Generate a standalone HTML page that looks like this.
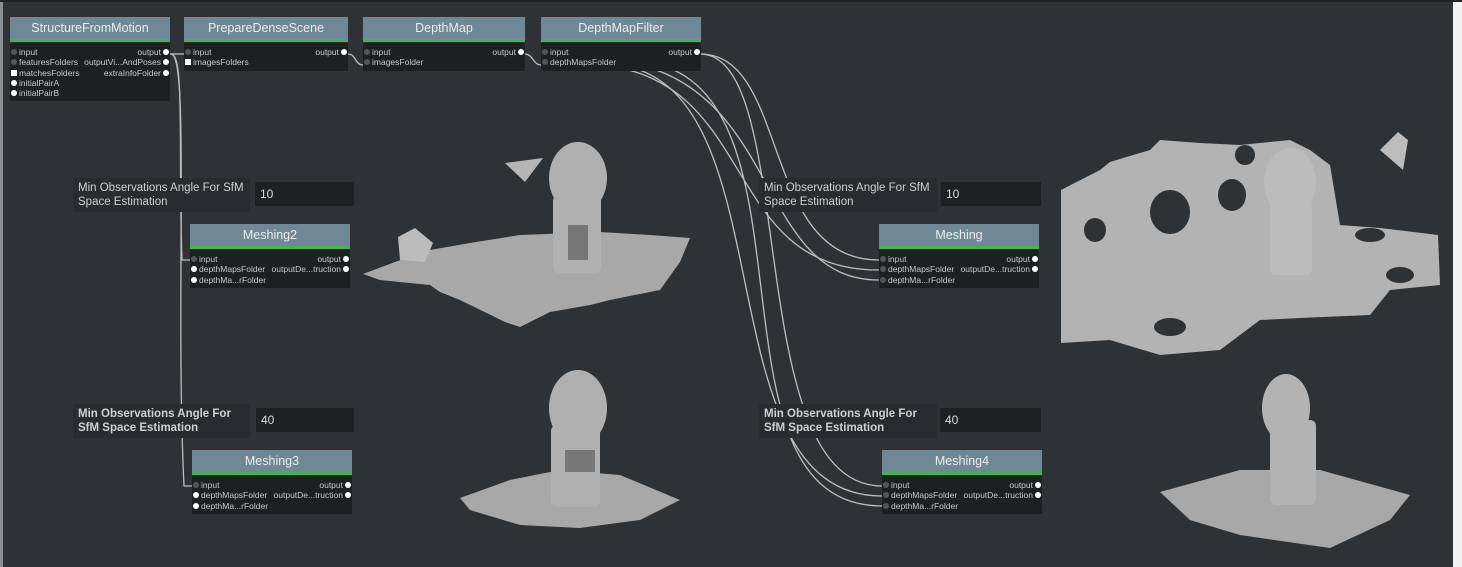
<!DOCTYPE html>
<html><head><meta charset="utf-8"><style>
body{margin:0;width:1462px;height:567px;background:#2f3235;position:relative;overflow:hidden;font-family:"Liberation Sans",sans-serif;}
.n{position:absolute;}
.h{height:22px;background:#6e8895;color:#e8eef0;font-size:12.5px;text-align:center;line-height:22px;border-bottom:3px solid #4caf50;}
.b{background:#1d1f21;color:#c9c9c9;font-size:8.5px;padding:4px 0 3px;margin-top:1px;}
.r{height:10.3px;line-height:10.3px;position:relative;padding-left:9px;white-space:nowrap;}
.r .o{position:absolute;right:9px;top:0;}
.d{position:absolute;left:1px;top:2px;width:6px;height:6px;border-radius:50%;background:#555;}
.w{background:#fff}
.sq{border-radius:0;background:#fff}
.od{position:absolute;right:1px;top:2px;width:6px;height:6px;border-radius:50%;background:#fff;}
.lab{position:absolute;background:#292b2e;color:#cfcfcf;font-size:11.5px;line-height:14px;padding:3px 5px;}
.val{position:absolute;background:#1e2022;color:#d8d8d8;font-size:12px;line-height:24px;padding-left:5px;height:24px;}
</style></head><body>
<div style="position:absolute;left:0;top:0;width:3px;height:567px;background:#8c8f92"></div>
<div style="position:absolute;right:0;top:0;width:9px;height:567px;background:#f2f2f2"></div>
<div style="position:absolute;left:0;top:0;width:1462px;height:2px;background:#222"></div>

<svg width="1462" height="567" style="position:absolute;left:0;top:0">
<g fill="none" stroke="#bdbdbd" stroke-width="1.3">
<path d="M171 54 C185 54 178 150 182 260 L190 260"/>
<path d="M171 54 C190 54 175 300 184 486 L192 486"/>
<path d="M348 54 C356 54 355 65 363 65"/>
<path d="M525 54 C533 54 533 65 541 65"/>
<path d="M170 54 L184 54"/>
<path d="M700 54 C790 54 760 260 879 260"/>
<path d="M700 54 C800 54 740 486 882 486"/>
<path d="M600 65 C760 80 720 270 879 270"/>
<path d="M620 65 C790 90 700 496 882 496"/>
<path d="M640 65 C780 100 760 280 879 280"/>
<path d="M660 65 C820 110 700 506 882 506"/>
</g>
<g fill="#a8a8a8">
<polygon points="363,274 395,262 430,250 470,243 520,235 600,232 650,235 690,238 680,262 660,290 610,300 590,305 550,312 520,327 505,322 460,300 440,292 430,285 380,280"/>
<polygon points="398,237 415,228 433,243 425,262 400,260" fill="#bcbcbc"/>
<polygon points="505,163 543,158 525,182" fill="#b5b5b5"/>
<ellipse cx="578" cy="178" rx="29" ry="36" fill="#b0b0b0"/>
<rect x="553" y="195" width="48" height="78" rx="6" fill="#b0b0b0"/>
<rect x="568" y="225" width="20" height="35" fill="#777"/>
<polygon points="460,498 510,480 560,470 620,475 680,500 640,520 580,528 520,525 470,510"/>
<ellipse cx="578" cy="408" rx="29" ry="38" fill="#b0b0b0"/>
<rect x="551" y="425" width="49" height="82" rx="6" fill="#b0b0b0"/>
<rect x="565" y="450" width="30" height="22" fill="#777"/>
<polygon points="1061,190 1100,170 1110,162 1150,150 1160,140 1200,143 1240,145 1290,140 1310,150 1330,165 1340,225 1380,228 1438,235 1440,285 1390,290 1370,315 1300,318 1260,320 1220,350 1160,355 1110,340 1061,343" fill="#b3b3b3"/>
<polygon points="1380,150 1398,132 1408,140 1403,170" fill="#bdbdbd"/>
<ellipse cx="1290" cy="182" rx="26" ry="34" fill="#bcbcbc"/>
<rect x="1270" y="200" width="42" height="75" rx="6" fill="#bcbcbc"/>
<polygon points="1160,492 1240,470 1320,470 1410,495 1390,520 1330,548 1240,535 1190,520"/>
<ellipse cx="1286" cy="408" rx="24" ry="34" fill="#b3b3b3"/>
<rect x="1270" y="420" width="46" height="85" rx="6" fill="#b3b3b3"/>
</g>
<g fill="#2f3235">
<ellipse cx="1170" cy="212" rx="20" ry="22"/><ellipse cx="1232" cy="195" rx="14" ry="16"/>
<ellipse cx="1095" cy="230" rx="11" ry="12"/><ellipse cx="1170" cy="327" rx="16" ry="9"/>
<ellipse cx="1370" cy="235" rx="15" ry="7"/><ellipse cx="1400" cy="275" rx="14" ry="8"/>
<ellipse cx="1245" cy="155" rx="10" ry="10"/>
</g>
</svg>

<div class="n" style="left:10px;top:17px;width:160px"><div class="h">StructureFromMotion</div><div class="b">
<div class="r"><span class="d"></span>input<span class="o">output</span><span class="od"></span></div>
<div class="r"><span class="d"></span>featuresFolders<span class="o">outputVi...AndPoses</span><span class="od"></span></div>
<div class="r"><span class="d sq"></span>matchesFolders<span class="o">extraInfoFolder</span><span class="od"></span></div>
<div class="r"><span class="d w"></span>initialPairA</div>
<div class="r"><span class="d w"></span>initialPairB</div></div></div>

<div class="n" style="left:184px;top:17px;width:164px"><div class="h">PrepareDenseScene</div><div class="b">
<div class="r"><span class="d"></span>input<span class="o">output</span><span class="od"></span></div>
<div class="r"><span class="d sq"></span>imagesFolders</div></div></div>

<div class="n" style="left:363px;top:17px;width:162px"><div class="h">DepthMap</div><div class="b">
<div class="r"><span class="d"></span>input<span class="o">output</span><span class="od"></span></div>
<div class="r"><span class="d"></span>imagesFolder</div></div></div>

<div class="n" style="left:541px;top:17px;width:160px"><div class="h">DepthMapFilter</div><div class="b">
<div class="r"><span class="d"></span>input<span class="o">output</span><span class="od"></span></div>
<div class="r"><span class="d"></span>depthMapsFolder</div></div></div>

<div class="lab" style="left:73px;top:178px;width:167px">Min Observations Angle For SfM Space Estimation</div>
<div class="val" style="left:255px;top:182px;width:94px">10</div>
<div class="n" style="left:190px;top:224px;width:160px"><div class="h">Meshing2</div><div class="b">
<div class="r"><span class="d"></span>input<span class="o">output</span><span class="od"></span></div>
<div class="r"><span class="d w"></span>depthMapsFolder<span class="o">outputDe...truction</span><span class="od"></span></div>
<div class="r"><span class="d w"></span>depthMa...rFolder</div></div></div>

<div class="lab" style="left:73px;top:404px;width:167px;font-weight:bold">Min Observations Angle For SfM Space Estimation</div>
<div class="val" style="left:256px;top:408px;width:93px">40</div>
<div class="n" style="left:192px;top:450px;width:160px"><div class="h">Meshing3</div><div class="b">
<div class="r"><span class="d"></span>input<span class="o">output</span><span class="od"></span></div>
<div class="r"><span class="d w"></span>depthMapsFolder<span class="o">outputDe...truction</span><span class="od"></span></div>
<div class="r"><span class="d w"></span>depthMa...rFolder</div></div></div>

<div class="lab" style="left:759px;top:178px;width:168px">Min Observations Angle For SfM Space Estimation</div>
<div class="val" style="left:941px;top:182px;width:95px">10</div>
<div class="n" style="left:879px;top:224px;width:160px"><div class="h">Meshing</div><div class="b">
<div class="r"><span class="d"></span>input<span class="o">output</span><span class="od"></span></div>
<div class="r"><span class="d"></span>depthMapsFolder<span class="o">outputDe...truction</span><span class="od"></span></div>
<div class="r"><span class="d"></span>depthMa...rFolder</div></div></div>

<div class="lab" style="left:759px;top:404px;width:168px;font-weight:bold">Min Observations Angle For SfM Space Estimation</div>
<div class="val" style="left:940px;top:408px;width:96px">40</div>
<div class="n" style="left:882px;top:450px;width:160px"><div class="h">Meshing4</div><div class="b">
<div class="r"><span class="d"></span>input<span class="o">output</span><span class="od"></span></div>
<div class="r"><span class="d"></span>depthMapsFolder<span class="o">outputDe...truction</span><span class="od"></span></div>
<div class="r"><span class="d"></span>depthMa...rFolder</div></div></div>
</body></html>
